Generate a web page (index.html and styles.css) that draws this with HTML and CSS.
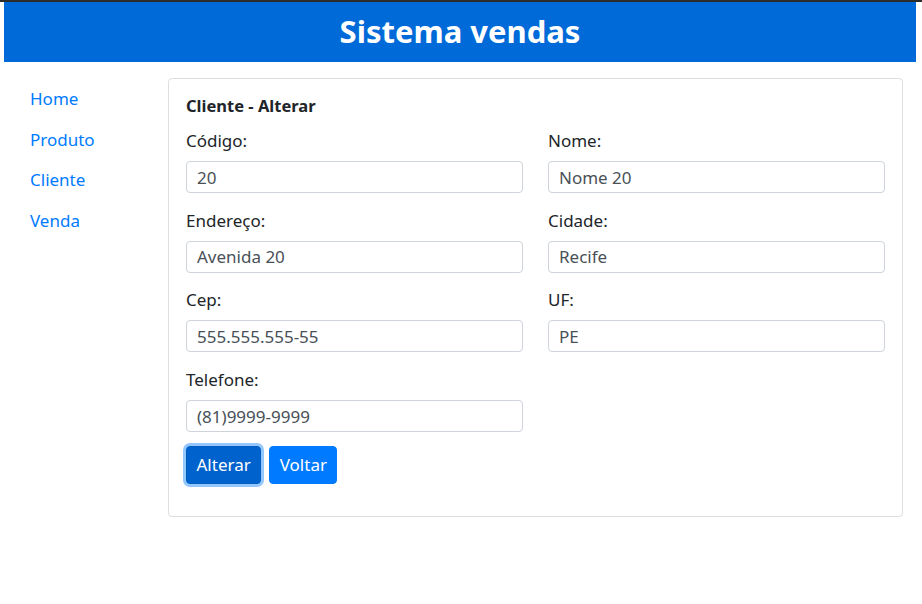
FILE: index.html
```html
<!DOCTYPE html>
<html lang="pt-BR">
<head>
<meta charset="utf-8">
<title>Sistema vendas</title>
<link rel="stylesheet" href="styles.css">
</head>
<body>
<div class="topline"></div>
<header class="header">
  <h1 class="header-title">Sistema vendas</h1>
</header>
<div class="main">
  <nav class="sidebar">
    <a class="nav-link" href="#">Home</a>
    <a class="nav-link" href="#">Produto</a>
    <a class="nav-link" href="#">Cliente</a>
    <a class="nav-link" href="#">Venda</a>
  </nav>
  <section class="card">
    <h2 class="card-title">Cliente - Alterar</h2>
    <form class="form">
      <div class="grid">
        <div class="group">
          <label class="label">Código:</label>
          <input class="input" type="text" value="20">
        </div>
        <div class="group">
          <label class="label">Nome:</label>
          <input class="input" type="text" value="Nome 20">
        </div>
        <div class="group">
          <label class="label">Endereço:</label>
          <input class="input" type="text" value="Avenida 20">
        </div>
        <div class="group">
          <label class="label">Cidade:</label>
          <input class="input" type="text" value="Recife">
        </div>
        <div class="group">
          <label class="label">Cep:</label>
          <input class="input" type="text" value="555.555.555-55">
        </div>
        <div class="group">
          <label class="label">UF:</label>
          <input class="input" type="text" value="PE">
        </div>
        <div class="group">
          <label class="label">Telefone:</label>
          <input class="input" type="text" value="(81)9999-9999">
        </div>
      </div>
      <div class="actions">
        <button type="button" class="btn btn-focus">Alterar</button>
        <button type="button" class="btn">Voltar</button>
      </div>
    </form>
  </section>
</div>
</body>
</html>
```

FILE: styles.css
```css
* { box-sizing: border-box; }

html, body {
  margin: 0;
  padding: 0;
  background: #fff;
}

body {
  font-family: "Noto Sans", "Open Sans", sans-serif;
  font-size: 17px;
  color: #212529;
}

.topline {
  height: 2px;
  background: #2d2d2d;
}

.header {
  margin: 0 6px 0 4px;
  height: 60px;
  background: #006ad9;
  display: flex;
  align-items: center;
  justify-content: center;
}

.header-title {
  margin: 0;
  color: #fff;
  font-size: 31px;
  font-weight: 700;
  line-height: 1;
  padding-bottom: 1px;
}

.main {
  display: flex;
  align-items: flex-start;
  margin-top: 16px;
}

.sidebar {
  width: 168px;
  flex: none;
  display: flex;
  flex-direction: column;
  padding-top: 1px;
}

.nav-link {
  display: block;
  padding-left: 30px;
  height: 40.5px;
  line-height: 40px;
  color: #007bff;
  text-decoration: none;
}

.card {
  flex: none;
  width: 735px;
  border: 1px solid rgba(0, 0, 0, 0.13);
  border-radius: 4px;
  padding: 14px 17px 32px;
  height: 439px;
}

.card-title {
  margin: 0 0 9px;
  font-size: 16.5px;
  font-weight: 700;
  line-height: 26px;
}

.grid {
  display: grid;
  grid-template-columns: minmax(0, 1fr) minmax(0, 1fr);
  column-gap: 25px;
}

.group {
  display: flex;
  flex-direction: column;
  margin-bottom: 14.7px;
}

.label {
  line-height: 26px;
  margin-bottom: 7px;
}

.input {
  width: 100%;
  min-width: 0;
  height: 32px;
  border: 1px solid #ced4da;
  border-radius: 4px;
  padding: 0 10px;
  font-family: inherit;
  font-size: 17px;
  color: #495057;
  background: #fff;
  outline: none;
}

.actions {
  display: flex;
  gap: 8px;
  margin-top: -1px;
}

.btn {
  height: 38px;
  padding: 0 9.5px;
  border: 1px solid #007bff;
  border-radius: 4px;
  background: #007bff;
  color: #fff;
  font-family: inherit;
  font-size: 17px;
  line-height: 1;
}

.btn-focus {
  background: #0062cc;
  border-color: #005cbf;
  box-shadow: 0 0 0 3px rgba(38, 143, 255, 0.5);
}
```
